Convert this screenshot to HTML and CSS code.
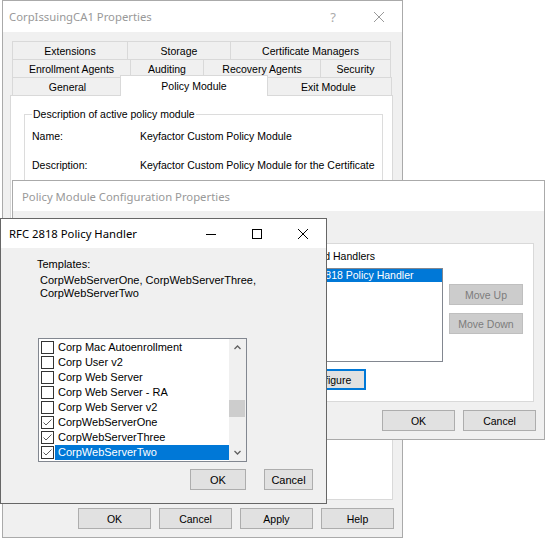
FILE: index.html
```html
<!DOCTYPE html>
<html lang="en">
<head>
    <meta charset="UTF-8">
    <meta name="viewport" content="width=device-width, initial-scale=1.0">
    <title>CorpIssuingCA1 Properties</title>
    <link rel="stylesheet" href="styles.css">
</head>
<body>
    <div class="desktop">

        <!-- CA properties sheet (inactive, at the back) -->
        <section class="win win-props">
            <div class="titlebar">
                <span class="title">CorpIssuingCA1 Properties</span>
                <div class="caption">
                    <span class="cap-btn cap-help">?</span>
                    <span class="cap-btn">
                        <svg width="10" height="10" viewBox="0 0 10 10"><path d="M0 0L10 10M10 0L0 10" stroke="currentColor" fill="none"/></svg>
                    </span>
                </div>
            </div>

            <div class="tabs">
                <div class="tab-row">
                    <div class="tab t-ext">Extensions</div>
                    <div class="tab t-storage">Storage</div>
                    <div class="tab t-certmgr">Certificate Managers</div>
                </div>
                <div class="tab-row">
                    <div class="tab t-enroll">Enrollment Agents</div>
                    <div class="tab t-audit">Auditing</div>
                    <div class="tab t-recovery">Recovery Agents</div>
                    <div class="tab t-security">Security</div>
                </div>
                <div class="tab-row">
                    <div class="tab t-general">General</div>
                    <div class="tab t-policy tab-active">Policy Module</div>
                    <div class="tab t-exit">Exit Module</div>
                </div>
            </div>

            <div class="tab-page">
                <fieldset class="group">
                    <legend>Description of active policy module</legend>
                    <div class="field">
                        <span class="field-label">Name:</span>
                        <span class="field-value">Keyfactor Custom Policy Module</span>
                    </div>
                    <div class="field">
                        <span class="field-label">Description:</span>
                        <span class="field-value">Keyfactor Custom Policy Module for the Certificate</span>
                    </div>
                </fieldset>
            </div>

            <div class="btn-row">
                <button class="btn">OK</button>
                <button class="btn">Cancel</button>
                <button class="btn">Apply</button>
                <button class="btn">Help</button>
            </div>
        </section>

        <!-- module configuration dialog -->
        <section class="win win-config">
            <div class="titlebar">
                <span class="title">Policy Module Configuration Properties</span>
            </div>

            <div class="config-page">
                <div class="handlers-label">Installed Handlers</div>
                <div class="handlers">
                    <div class="listbox">
                        <div class="list-item selected">RFC 2818 Policy Handler</div>
                    </div>
                    <div class="side-buttons">
                        <button class="btn btn-disabled">Move Up</button>
                        <button class="btn btn-disabled">Move Down</button>
                    </div>
                </div>
                <button class="btn btn-configure">Configure</button>
            </div>

            <div class="btn-row">
                <button class="btn">OK</button>
                <button class="btn">Cancel</button>
            </div>
        </section>

        <!-- handler settings (active window) -->
        <section class="win win-handler">
            <div class="titlebar">
                <span class="title">RFC 2818 Policy Handler</span>
                <div class="caption">
                    <span class="cap-btn">
                        <svg width="10" height="10" viewBox="0 0 10 10"><path d="M0 5.5H10" stroke="currentColor" fill="none"/></svg>
                    </span>
                    <span class="cap-btn">
                        <svg width="10" height="10" viewBox="0 0 10 10"><rect x="0.5" y="0.5" width="9" height="9" stroke="currentColor" fill="none"/></svg>
                    </span>
                    <span class="cap-btn">
                        <svg width="10" height="10" viewBox="0 0 10 10"><path d="M0 0L10 10M10 0L0 10" stroke="currentColor" fill="none"/></svg>
                    </span>
                </div>
            </div>

            <div class="handler-body">
                <div class="templates-label">Templates:</div>
                <div class="templates">CorpWebServerOne, CorpWebServerThree,<br>CorpWebServerTwo</div>

                <div class="checklist">
                    <div class="check-items">
                        <div class="check-item"><span class="box"></span><span class="check-text">Corp Mac Autoenrollment</span></div>
                        <div class="check-item"><span class="box"></span><span class="check-text">Corp User v2</span></div>
                        <div class="check-item"><span class="box"></span><span class="check-text">Corp Web Server</span></div>
                        <div class="check-item"><span class="box"></span><span class="check-text">Corp Web Server - RA</span></div>
                        <div class="check-item"><span class="box"></span><span class="check-text">Corp Web Server v2</span></div>
                        <div class="check-item">
                            <span class="box"><svg width="11" height="11" viewBox="0 0 11 11"><path d="M1.5 5.5L4 8L9.5 2.5" stroke="#5a5a5a" fill="none"/></svg></span>
                            <span class="check-text">CorpWebServerOne</span>
                        </div>
                        <div class="check-item">
                            <span class="box"><svg width="11" height="11" viewBox="0 0 11 11"><path d="M1.5 5.5L4 8L9.5 2.5" stroke="#5a5a5a" fill="none"/></svg></span>
                            <span class="check-text">CorpWebServerThree</span>
                        </div>
                        <div class="check-item">
                            <span class="box"><svg width="11" height="11" viewBox="0 0 11 11"><path d="M1.5 5.5L4 8L9.5 2.5" stroke="#5a5a5a" fill="none"/></svg></span>
                            <span class="check-text selected">CorpWebServerTwo</span>
                        </div>
                    </div>
                    <div class="scrollbar">
                        <div class="scroll-arrow">
                            <svg width="7" height="5" viewBox="0 0 7 5"><path d="M0.5 4L3.5 1L6.5 4" stroke="#606060" stroke-width="1.3" fill="none"/></svg>
                        </div>
                        <div class="scroll-track"><div class="scroll-thumb"></div></div>
                        <div class="scroll-arrow">
                            <svg width="7" height="5" viewBox="0 0 7 5"><path d="M0.5 1L3.5 4L6.5 1" stroke="#606060" stroke-width="1.3" fill="none"/></svg>
                        </div>
                    </div>
                </div>

                <div class="handler-buttons">
                    <button class="btn btn-ok">OK</button>
                    <button class="btn btn-cancel">Cancel</button>
                </div>
            </div>
        </section>

    </div>
</body>
</html>
```

FILE: styles.css
```css
* {
    box-sizing: border-box;
}
body {
    margin: 0;
    background: #fff;
    font-family: "Liberation Sans", Arial, sans-serif;
    font-size: 10.5px;
    color: #000;
}
.desktop {
    position: relative;
    width: 545px;
    height: 538px;
    overflow: hidden;
}

/* windows */
.win {
    position: absolute;
    display: flex;
    flex-direction: column;
    background: #f0f0f0;
    border: 1px solid #aaa;
}
.win-props {
    left: 2px;
    top: 0;
    width: 401px;
    height: 538px;
}
.win-config {
    left: 12px;
    top: 180px;
    width: 533px;
    height: 260px;
}
.win-handler {
    left: 0;
    top: 218px;
    width: 327px;
    height: 286px;
    border-color: #666;
    font-size: 11px;
}

.titlebar {
    flex: none;
    display: flex;
    align-items: center;
    height: 31px;
    background: #fff;
    font-family: "Noto Sans", sans-serif;
    font-size: 11.3px;
    color: #999;
}
.win-props .titlebar {
    padding-left: 6px;
}
.win-config .titlebar {
    height: 30px;
    padding-left: 9px;
}
.win-handler .titlebar {
    height: 29px;
    padding-left: 8px;
    color: #000;
}
.caption {
    display: flex;
    height: 100%;
    margin-left: auto;
}
.cap-btn {
    width: 46px;
    display: flex;
    align-items: center;
    justify-content: center;
}
.cap-help {
    font-size: 13px;
    color: #aaa;
}
.cap-btn svg {
    display: block;
}

/* buttons */
.btn {
    width: 73px;
    height: 21px;
    padding: 0;
    border: 1px solid #adadad;
    background: #e1e1e1;
    font: inherit;
    color: #000;
}
.btn-row {
    flex: none;
    display: flex;
    justify-content: flex-end;
    gap: 8px;
    margin-top: 8px;
    padding-right: 8px;
}

/* property sheet tabs */
.tabs {
    margin: 9px 0 0 9px;
}
.tab-row {
    display: flex;
    height: 18px;
}
.tab {
    flex: none;
    display: flex;
    align-items: center;
    justify-content: center;
    height: 18px;
    margin-right: -1px;
    border: 1px solid #d9d9d9;
    border-bottom: 0;
    white-space: nowrap;
}
.t-ext { width: 116px; }
.t-storage { width: 104px; }
.t-certmgr { width: 161px; }
.t-enroll { width: 119px; }
.t-audit { width: 74px; }
.t-recovery { width: 118px; }
.t-security { width: 71px; }
.t-general { width: 111px; }
.t-policy { width: 148px; }
.t-exit { width: 127px; }
.tab-active {
    position: relative;
    z-index: 1;
    height: 21px;
    margin: -2px -3px 0 -2px;
    background: #fff;
}

.tab-page {
    flex: none;
    width: 383px;
    height: 405px;
    margin-left: 7px;
    padding: 12px 0 0 13px;
    background: #fff;
    border: 1px solid #d9d9d9;
}
.group {
    width: 357px;
    height: 110px;
    margin: 0;
    padding: 10px 7px 0;
    border: 1px solid #dcdcdc;
}
.group legend {
    padding: 0 1px;
}
.field {
    display: flex;
    line-height: 13px;
}
.field + .field {
    margin-top: 16px;
}
.field-label {
    flex: none;
    width: 108px;
}
.field-value {
    white-space: nowrap;
}

/* configuration dialog */
.config-page {
    flex: none;
    height: 159px;
    margin: 32px 10px 0 9px;
    padding: 6px 10px 0 268px;
    background: #fff;
    border: 1px solid #d9d9d9;
}
.handlers-label {
    line-height: 13px;
}
.handlers {
    display: flex;
    margin-top: 5px;
}
.listbox {
    flex: 1;
    height: 94px;
    background: #fff;
    border: 1px solid #828790;
}
.list-item {
    height: 13px;
    line-height: 13px;
    padding-left: 3px;
    white-space: nowrap;
}
.list-item.selected {
    background: #0078d7;
    color: #fff;
}
.side-buttons {
    display: flex;
    flex-direction: column;
    gap: 8px;
    margin: 16px 0 0 6px;
}
.btn-disabled {
    width: 74px;
    background: #ccc;
    border-color: #bfbfbf;
    color: #7c7c7c;
}
.btn-configure {
    display: block;
    width: 75px;
    margin-top: 7px;
    border: 2px solid #0078d7;
}

/* handler dialog */
.handler-body {
    padding: 10px 0 0 36px;
}
.templates-label,
.templates {
    line-height: 13px;
}
.templates {
    margin: 3px 0 0 3px;
}
.checklist {
    display: flex;
    width: 209px;
    height: 124px;
    margin: 38px 0 0 1px;
    background: #fff;
    border: 1px solid #828790;
}
.check-items {
    flex: 1;
    padding-top: 1px;
}
.check-item {
    display: flex;
    align-items: center;
    height: 15px;
}
.box {
    flex: none;
    width: 13px;
    height: 13px;
    margin: 0 1px 0 2px;
    background: #fff;
    border: 1px solid #333;
}
.box svg {
    display: block;
}
.check-text {
    flex: 1;
    height: 15px;
    line-height: 15px;
    padding-left: 3px;
    white-space: nowrap;
}
.check-text.selected {
    background: #0078d7;
    color: #fff;
}
.scrollbar {
    flex: none;
    display: flex;
    flex-direction: column;
    width: 17px;
    background: #f0f0f0;
}
.scroll-arrow {
    flex: none;
    height: 17px;
    display: flex;
    align-items: center;
    justify-content: center;
}
.scroll-track {
    flex: 1;
}
.scroll-thumb {
    width: 16px;
    height: 17px;
    margin-top: 44px;
    background: #cdcdcd;
}
.handler-buttons {
    display: flex;
    justify-content: flex-end;
    gap: 18px;
    margin-top: 7px;
    padding-right: 13px;
}
.btn-ok {
    width: 56px;
}
.btn-cancel {
    width: 49px;
}
```
